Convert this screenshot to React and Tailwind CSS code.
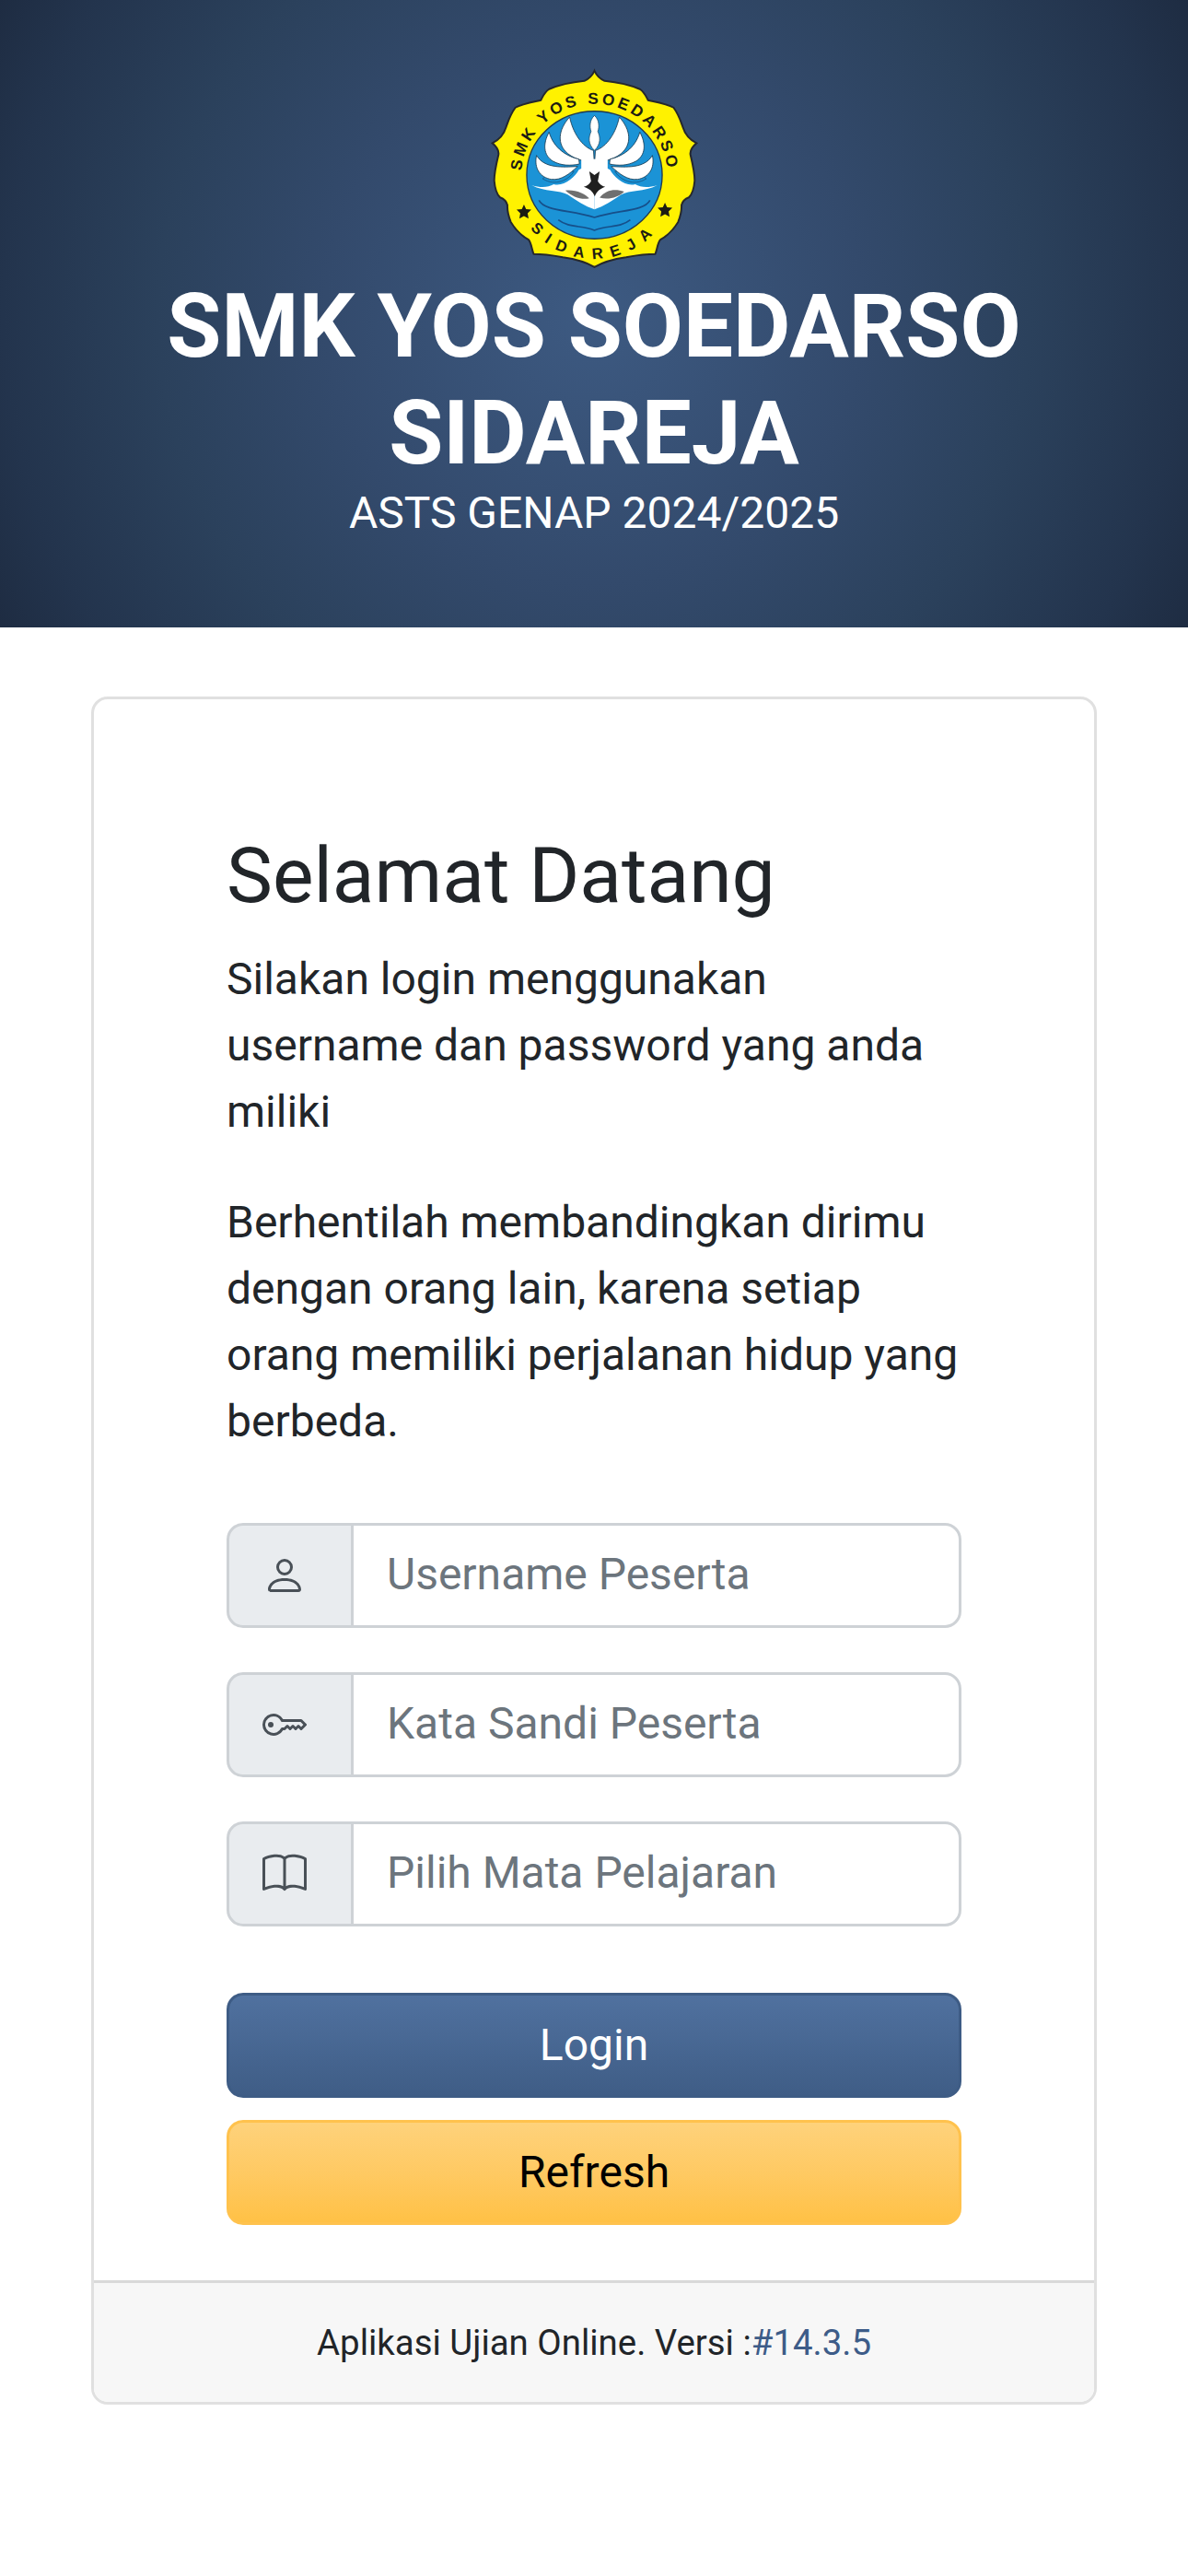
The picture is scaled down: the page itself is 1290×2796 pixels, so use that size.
import React from "react";
import { BsPerson, BsKey, BsBook } from "react-icons/bs";

function Logo() {
  const half = (
    <>
      <path d="M198 425C230 435 252 432 270 422C300 432 340 400 352 375L403 350L403 504C372 494 342 474 316 456C290 440 240 448 198 425Z" fill="#fff" />
      <path d="M234 404C252 387 290 376 336 380C320 408 275 430 234 404Z" fill="#1b93d6" stroke="#17466f" strokeWidth="2" />
      <g fill="#fff" stroke="#17384f" strokeWidth="2.5">
        <path d="M322 203C284 245 280 292 316 322C345 344 375 350 402 344L400 312C372 304 336 268 322 203Z" />
        <path d="M255 252C234 290 236 328 268 347C295 362 325 362 354 356L352 340C315 332 270 306 255 252Z" />
        <path d="M214 328C205 370 226 400 262 406C295 410 322 388 348 364C300 366 240 372 214 328Z" />
      </g>
    </>
  );
  return (
    <svg viewBox="62 44 682 654" className="block mx-auto w-[227px] h-[218px]">
      <path
        d="M403 52C395 70 385 78 370 85C340 88 295 95 255 112C240 122 235 135 228 148C195 155 165 160 145 172C128 195 122 215 115 235C108 258 90 278 70 288C82 298 92 310 90 325C84 350 76 385 76 410C78 435 85 455 95 465C108 470 116 478 119 490C118 510 122 525 130 545C142 565 165 590 188 603C198 615 198 635 205 650C235 650 270 655 300 660C335 665 370 672 403 692C436 672 471 665 506 660C536 655 571 650 601 650C608 635 608 615 618 603C641 590 664 565 676 545C684 525 688 510 687 490C690 478 698 470 711 465C721 455 728 435 730 410C730 385 722 350 716 325C714 310 724 298 736 288C716 278 698 258 691 235C684 215 678 195 661 172C641 160 611 155 578 148C571 135 566 122 551 112C511 95 466 88 436 85C421 78 411 70 403 52Z"
        fill="#fff200"
        stroke="#26282b"
        strokeWidth="6"
      />
      <ellipse cx="403" cy="392" rx="221" ry="208" fill="#1b93d6" stroke="#20394f" strokeWidth="4" />
      <g transform="translate(806 0) scale(-1 1)">{half}</g>
      {half}
      <path d="M403 198C419 212 419 235 414 250C422 268 425 290 403 312C381 290 384 268 392 250C387 235 387 212 403 198Z" fill="#fff" stroke="#17384f" strokeWidth="2" />
      <path d="M360 340H446V420H360Z" fill="#fff" />
      <path d="M386 380L403 392L420 380L414 412C420 422 428 428 438 430C422 436 410 444 404 462C398 444 386 436 368 430C378 428 386 422 392 412Z" fill="#1f1f1f" />
      <path d="M308 442C340 438 372 452 386 468C360 474 330 462 308 442Z" fill="#6f6f6f" />
      <path d="M420 466C440 440 470 436 500 446C480 465 450 474 420 466Z" fill="#6f6f6f" />
      <g fill="none" stroke="#164f8a" strokeWidth="5">
        <path d="M222 474C240 510 320 505 403 530C486 505 566 510 584 474" />
        <path d="M285 538C320 565 360 555 403 572C446 555 486 565 520 538" />
      </g>
      <defs>
        <path id="arcTop" d="M165 392A238 232 0 0 1 641 392" />
        <path id="arcBottom" d="M180 548A272 272 0 0 0 626 548" />
      </defs>
      <text fill="#1c1c12" fontSize="52" fontWeight="700" style={{ fontFamily: "Liberation Sans, sans-serif" }}>
        <textPath href="#arcTop" startOffset="50%" textAnchor="middle" letterSpacing="10">SMK YOS SOEDARSO</textPath>
      </text>
      <text fill="#1c1c12" fontSize="50" fontWeight="700" style={{ fontFamily: "Liberation Sans, sans-serif" }}>
        <textPath href="#arcBottom" startOffset="50%" textAnchor="middle" letterSpacing="28">SIDAREJA</textPath>
      </text>
      <path d="M173 488l7 15 17 2-12 12 3 17-15-8-15 8 3-17-12-12 17-2z" fill="#1c1c12" />
      <path d="M633 482l7 15 17 2-12 12 3 17-15-8-15 8 3-17-12-12 17-2z" fill="#1c1c12" />
    </svg>
  );
}

function Field({ icon, placeholder }) {
  return (
    <div className="flex h-[114px] mb-[48px]">
      <div className="flex items-center w-[138px] shrink-0 pl-[36px] bg-[#e9ecef] border-[3px] border-[#ced2d6] rounded-l-[18px] text-[#495057]">
        {icon}
      </div>
      <input
        placeholder={placeholder}
        className="min-w-0 flex-1 -ml-[3px] pl-[36px] pr-[36px] pb-[3px] text-[48px] bg-white text-[#212529] placeholder:text-[#6c757d] border-[3px] border-[#ced2d6] rounded-r-[18px] outline-none"
      />
    </div>
  );
}

export default function App() {
  return (
    <div className="min-h-[2796px] bg-white [font-family:Roboto,sans-serif] text-[#212529]">
      <header className="h-[681px] pt-[74px] text-center text-white bg-[radial-gradient(circle,#3d5a82_0%,#334a6c_40%,#2b415c_65%,#23344d_88%,#1e2c42_100%)]">
        <Logo />
        <h1 className="mt-[4px] text-[96px] leading-[116px] font-bold">
          SMK YOS SOEDARSO
          <br />
          SIDAREJA
        </h1>
        <p className="text-[48px] leading-[58px]">ASTS GENAP 2024/2025</p>
      </header>

      <main className="pt-[75px] px-[99px]">
        <div className="border-[3px] border-[#e0e0e0] rounded-[18px] overflow-hidden bg-white">
          <div className="pt-[141px] pb-[60px] px-[144px]">
            <h2 className="text-[84px] leading-[101px] mb-[26px]">Selamat Datang</h2>
            <p className="text-[48px] leading-[72px] mb-[48px]">
              Silakan login menggunakan username dan password yang anda miliki
            </p>
            <p className="text-[48px] leading-[72px] mb-[74px]">
              Berhentilah membandingkan dirimu dengan orang lain, karena setiap orang memiliki perjalanan hidup yang berbeda.
            </p>
            <Field icon={<BsPerson size={48} />} placeholder="Username Peserta" />
            <Field icon={<BsKey size={48} />} placeholder="Kata Sandi Peserta" />
            <Field icon={<BsBook size={48} />} placeholder="Pilih Mata Pelajaran" />
            <div className="pt-[24px]">
              <button className="block w-full h-[114px] text-[48px] text-white rounded-[18px] border-[3px] border-[#3e5c85] bg-gradient-to-b from-[#50719f] to-[#3f5d86]">
                Login
              </button>
              <button className="block w-full h-[114px] mt-[24px] text-[48px] text-black rounded-[18px] border-[3px] border-[#ffc24d] bg-gradient-to-b from-[#fed27b] to-[#ffc145]">
                Refresh
              </button>
            </div>
          </div>
          <footer className="h-[132px] border-t-[3px] border-[#d9d9d9] bg-[#f7f7f7] flex items-center justify-center text-[38.4px]">
            <span>
              Aplikasi Ujian Online. Versi :<a className="text-[#3d5c88]">#14.3.5</a>
            </span>
          </footer>
        </div>
      </main>
    </div>
  );
}
